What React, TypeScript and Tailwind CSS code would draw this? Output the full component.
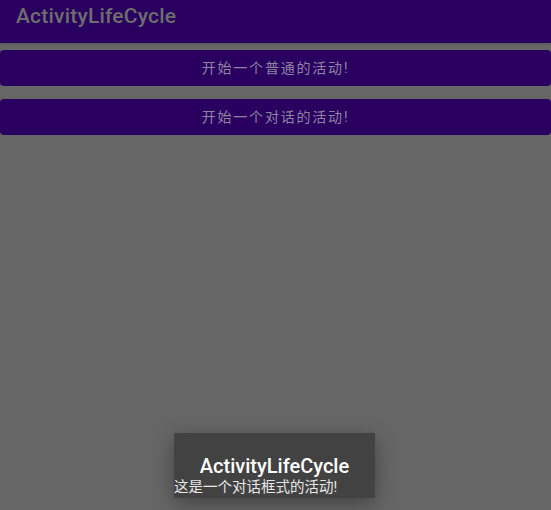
import React from "react";

function App() {
  return (
    <div
      className="relative h-[510px] w-[551px] overflow-hidden bg-[#666666]"
      style={{ fontFamily: 'Roboto, "Noto Sans CJK SC", sans-serif' }}
    >
      <div className="h-[43px] bg-[#29005f] px-4 pt-[3px] shadow">
        <p className="text-[21px] font-medium leading-[27px] tracking-[0.2px] text-[#6e6e6e]">ActivityLifeCycle</p>
      </div>
      <div className="mt-[7px] flex flex-col gap-[13px]">
        <button className="h-[36px] w-full rounded bg-[#29005f] pt-[1px] text-[14px] tracking-[1.8px] text-[#8e84a4]">
          开始一个普通的活动!
        </button>
        <button className="h-[36px] w-full rounded bg-[#29005f] pt-[1px] text-[14px] tracking-[1.8px] text-[#8e84a4]">
          开始一个对话的活动!
        </button>
      </div>
      <div className="absolute left-[174px] top-[433px] h-[65px] w-[201px] bg-[#424242] shadow-[0_6px_20px_rgba(0,0,0,0.35)]">
        <p className="mt-[20px] text-center text-[20px] font-medium leading-[26px] text-white">
          ActivityLifeCycle
        </p>
        <p className="whitespace-nowrap text-[14.5px] leading-[17px] text-[#e6e6e6]">
          这是一个对话框式的活动!
        </p>
      </div>
    </div>
  );
}

export default App;
